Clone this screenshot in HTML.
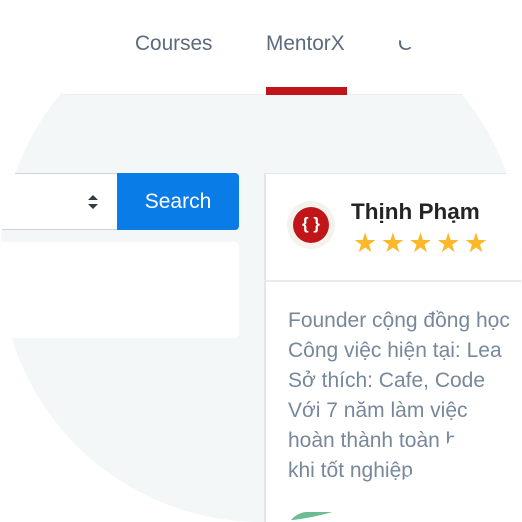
<!DOCTYPE html>
<html><head><meta charset="utf-8"><style>
html,body{margin:0;padding:0;background:#fff;overflow:hidden;width:522px;height:522px;}
#c{position:relative;width:522px;height:522px;border-radius:50%;overflow:hidden;background:#f4f7f8;font-family:"Liberation Sans",sans-serif;}
.hdr{position:absolute;left:0;top:0;width:522px;height:95px;background:#fff;border-bottom:1px solid #eceff1;box-sizing:border-box;}
.nav{position:absolute;top:32px;font-size:20.8px;color:#5b6b7b;}
.ul{position:absolute;left:266px;top:87px;width:81px;height:8px;background:#c0161a;}
.inp{position:absolute;left:-10px;top:173px;width:127px;height:57px;background:#fff;border:1px solid #ced4da;border-right:none;box-sizing:border-box;}
.btn{position:absolute;left:117px;top:173px;width:122px;height:57px;background:#0a7ce8;border-radius:0 4px 4px 0;color:#fff;font-size:21px;line-height:57px;text-align:center;}
.box{position:absolute;left:-10px;top:242px;width:249px;height:96px;background:#fff;border-radius:4px;}
.card{position:absolute;left:264px;top:173px;width:258px;height:349px;background:#fff;border-left:2px solid #e3e6e9;border-top:1px solid #e3e6e9;box-sizing:border-box;}
.hr{position:absolute;left:264px;top:280px;width:258px;height:2px;background:#e8ebed;}
.av{position:absolute;left:287px;top:201px;width:48px;height:48px;border-radius:50%;background:#f3f2ed;}
.av2{position:absolute;left:293px;top:207px;width:36px;height:36px;border-radius:50%;background:#c0161a;color:#fff;font-weight:bold;font-size:17px;line-height:34px;text-align:center;}
.name{position:absolute;left:351px;top:199px;font-size:22.5px;font-weight:bold;color:#242424;}
.stars{position:absolute;left:353px;top:229px;font-size:27px;color:#fbb829;letter-spacing:3.5px;line-height:28px;}
.desc{position:absolute;left:288px;top:306px;font-size:21px;line-height:30px;color:#77889a;white-space:nowrap;}
.grn{position:absolute;left:290px;top:512px;width:42px;height:14px;background:#6dbb93;border-radius:14px 0 0 0;transform:skewX(-20deg);}
</style></head><body>
<div id="c">
<div class="hdr"></div>
<div class="nav" style="left:135px">Courses</div>
<div class="nav" style="left:266px">MentorX</div>
<div class="nav" style="left:398px">C</div>
<div class="ul"></div>
<div class="inp"><svg style="position:absolute;left:96px;top:20px" width="12" height="16"><path d="M1 6L6 1L11 6Z M1 10L6 15L11 10Z" fill="#343a40"/></svg></div>
<div class="btn">Search</div>
<div class="box"></div>
<div class="card"></div>
<div class="hr"></div>
<div class="av"></div><div class="av2">{ }</div>
<div class="name">Thịnh Phạm</div>
<div class="stars">★★★★★</div>
<div class="desc">Founder cộng đồng học<br>Công việc hiện tại: Lea<br>Sở thích: Cafe, Code<br>Với 7 năm làm việc<br>hoàn thành toàn b<br>khi tốt nghiệp</div>
<div class="grn"></div>
</div>
</body></html>
